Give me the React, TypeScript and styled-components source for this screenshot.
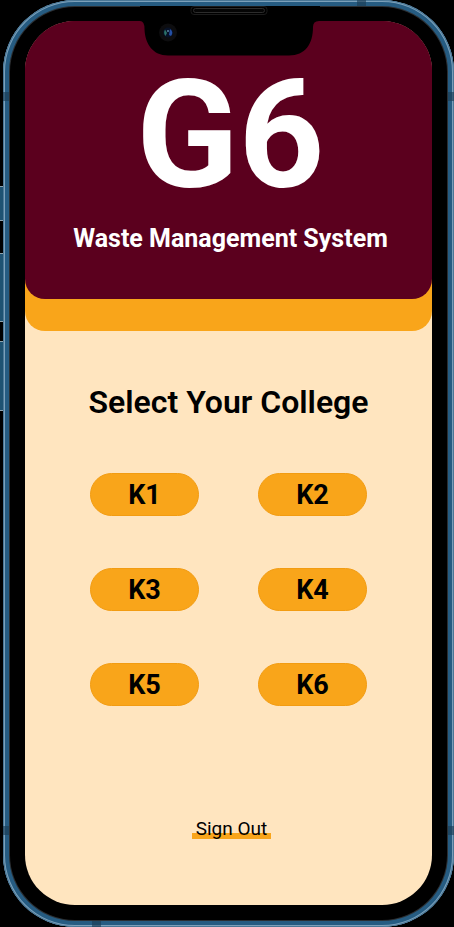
import React from "react";
import styled, { createGlobalStyle } from "styled-components";

const GlobalStyle = createGlobalStyle`
  *, *::before, *::after { box-sizing: border-box; }
  body { margin: 0; background: #000; font-family: Roboto, "Liberation Sans", sans-serif; color: #000; }
`;

const Stage = styled.div`
  display: flex;
  min-height: 100vh;
  padding-left: 3px;
  background: #000;
  overflow: hidden;
`;

const Phone = styled.div`
  position: relative;
  flex: 1;
  display: flex;
  padding: 21px 22px 22px;
  border-radius: 72px;
  background: #000;
  box-shadow:
    inset 0 0 0 1px #4a7796,
    inset 0 0 0 2px #7ba0ba,
    inset 0 0 0 6px #265c82,
    inset 0 0 0 7px #2b2f33;
`;

const SideKey = styled.span<{ $top: number; $height: number }>`
  position: absolute;
  left: -3px;
  top: ${(p) => p.$top}px;
  width: 3px;
  height: ${(p) => p.$height}px;
  background: #1e5272;
  border: solid #8fa3ae;
  border-width: 1px 0;
`;

const Band = styled.span<{ $side: "left" | "right" | "top" | "bottom"; $at: string }>`
  position: absolute;
  background: rgba(28, 62, 86, 0.65);
  ${(p) => p.$side}: 0;
  ${(p) =>
    p.$side === "left" || p.$side === "right"
      ? `top: ${p.$at}; width: 6px; height: 9px;`
      : `left: ${p.$at}; width: 9px; height: 6px;`}
`;

const Notch = styled.svg`
  position: absolute;
  top: 6px;
  left: 50%;
  margin-left: -89px;
  width: 180px;
  height: 52px;
`;

const Screen = styled.main`
  flex: 1;
  display: flex;
  flex-direction: column;
  align-items: stretch;
  border-radius: 50px;
  overflow: hidden;
  background: #ffe5bf;
`;

const Banner = styled.div`
  background: linear-gradient(#5b001e 50%, #f9a51a 50%);
  border-radius: 0 0 20px 20px;
  padding-bottom: 32px;
`;

const Header = styled.header`
  display: flex;
  flex-direction: column;
  align-items: center;
  height: 278px;
  padding: 27px 0 0 4px;
  border-radius: 0 0 20px 20px;
  background: #5b001e;
  color: #fff;
  text-align: center;
`;

const Logo = styled.h1`
  margin: 0;
  font-size: 150px;
  line-height: 176px;
  font-weight: 700;
`;

const Tagline = styled.p`
  margin: 0;
  font-size: 25px;
  line-height: 30px;
  font-weight: 700;
`;

const Content = styled.section`
  flex: 1;
  display: flex;
  flex-direction: column;
  align-items: center;
  padding-top: 52px;
`;

const Title = styled.h2`
  margin: 0;
  font-size: 32px;
  line-height: 38px;
  font-weight: 600;
`;

const Colleges = styled.div`
  display: grid;
  grid-template-columns: repeat(2, 109px);
  gap: 52px 59px;
  margin-top: 52px;
`;

const CollegeButton = styled.button`
  height: 43px;
  padding: 0;
  border: 1px solid #f29c12;
  border-radius: 22px;
  background: #f9a51a;
  color: #000;
  font: 700 27px/40px Roboto, "Liberation Sans", sans-serif;
  cursor: pointer;
`;

const SignOut = styled.a`
  margin: 112px 0 0 6px;
  padding: 0 4px;
  background: linear-gradient(#f9a51a, #f9a51a) 0 15px / 100% 6px no-repeat;
  color: #000;
  font-size: 19px;
  line-height: 22px;
  text-decoration: none;
`;

const colleges = ["K1", "K2", "K3", "K4", "K5", "K6"];

function NotchArt() {
  return (
    <Notch viewBox="0 0 180 52" aria-hidden="true">
      <path
        d="M0 0H180V15H179Q173 15 173 21C173 38 165 49.500 149 49.500H28C13 49.500 5 38 4.500 23Q4.500 15 0 15Z"
        fill="#000"
      />
      <rect x="51" y="0.500" width="76" height="8" rx="3" fill="#000" stroke="#1b1b1b" />
      <rect x="53.500" y="2.500" width="71" height="4" rx="2" fill="#050505" stroke="#2c2c2c" />
      <circle cx="28" cy="26.500" r="9" fill="#0d0d0f" />
      <circle cx="28" cy="26.500" r="5" fill="#071126" />
      <path d="M25 23.500Q23 27 25.500 30L27 27Z" fill="#2c7268" />
      <path d="M30 23Q34 26 31 30L29 29Z" fill="#244fa5" />
      <circle cx="28" cy="25" r="1" fill="#5a87a3" />
    </Notch>
  );
}

export default function App() {
  return (
    <>
      <GlobalStyle />
      <Stage>
        <Phone>
          <SideKey $top={186} $height={35} />
          <SideKey $top={253} $height={69} />
          <SideKey $top={341} $height={70} />
          <Band $side="left" $at="92px" />
          <Band $side="right" $at="92px" />
          <Band $side="top" $at="354px" />
          <Band $side="left" $at="826px" />
          <Band $side="right" $at="826px" />
          <Band $side="bottom" $at="89px" />
          <Screen>
            <Banner>
              <Header>
                <Logo>G6</Logo>
                <Tagline>Waste Management System</Tagline>
              </Header>
            </Banner>
            <Content>
              <Title>Select Your College</Title>
              <Colleges>
                {colleges.map((name) => (
                  <CollegeButton key={name} type="button">
                    {name}
                  </CollegeButton>
                ))}
              </Colleges>
              <SignOut href="#sign-out">Sign Out</SignOut>
            </Content>
          </Screen>
          <NotchArt />
        </Phone>
      </Stage>
    </>
  );
}
